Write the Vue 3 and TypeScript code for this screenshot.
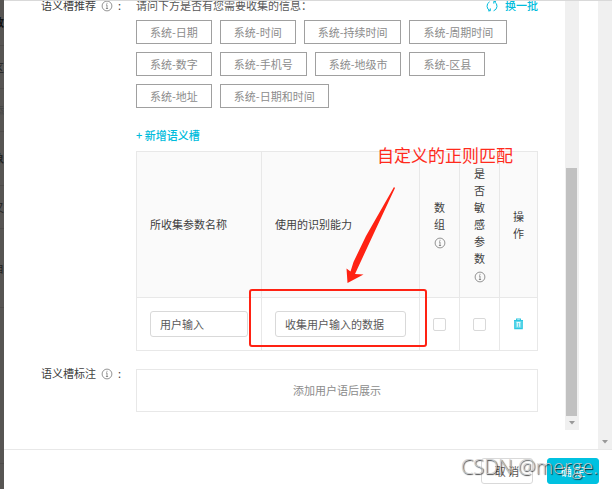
<script setup lang="ts">
import { ref } from 'vue'

interface BackdropRow {
  text: string
  size: string
}

const backdropRows: BackdropRow[] = [
  { text: '数', size: 'head' },
  { text: '区', size: 'row' },
  { text: '添', size: 'row faint' },
  { text: '象', size: 'tall' },
  { text: '又', size: 'row' },
  { text: '自', size: 'wide' },
  { text: '', size: 'rest' },
]

const suggestions = ref<string[]>([
  '系统-日期',
  '系统-时间',
  '系统-持续时间',
  '系统-周期时间',
  '系统-数字',
  '系统-手机号',
  '系统-地级市',
  '系统-区县',
  '系统-地址',
  '系统-日期和时间',
])

const paramName = ref('用户输入')
const ability = ref('收集用户输入的数据')
const isArray = ref(false)
const isSensitive = ref(false)
</script>

<template>
  <div class="page">
    <div class="backdrop" aria-hidden="true">
      <div v-for="(row, i) in backdropRows" :key="i" class="backdrop-row" :class="row.size">{{ row.text }}</div>
    </div>

    <section class="dialog">
      <div class="body">
        <div class="scroller">
          <div class="form">
            <div class="label">
              <span>语义槽推荐</span>
              <svg class="info" viewBox="0 0 12 12"><circle cx="6" cy="6" r="4.9" /><path d="M5 4.9h1v3.6M4.9 8.5h2.2M6 2.8v1" /></svg>
              <span>:</span>
            </div>
            <div class="field">
              <div class="hint">
                <span>请问下方是否有您需要收集的信息：</span>
                <button type="button" class="link refresh">
                  <svg class="refresh-icon" viewBox="0 0 12 12"><path d="M3.6 1.8A4.9 4.9 0 0 0 4 10.6M8.4 1.8A4.9 4.9 0 0 1 7.6 10.8M4.3 8.4v2.4H2M7.8 3.6V1.4h2.2" /></svg>
                  <span>换一批</span>
                </button>
              </div>
              <div class="tags">
                <button v-for="tag in suggestions" :key="tag" type="button" class="tag">{{ tag }}</button>
              </div>
              <button type="button" class="link add">+ 新增语义槽</button>

              <div class="slots">
                <table>
                  <colgroup>
                    <col class="col-name" />
                    <col />
                    <col class="col-narrow" />
                    <col class="col-narrow" />
                    <col class="col-action" />
                  </colgroup>
                  <thead>
                    <tr>
                      <th class="wide-head">所收集参数名称</th>
                      <th class="wide-head">使用的识别能力</th>
                      <th>
                        数组
                        <svg class="info" viewBox="0 0 12 12"><circle cx="6" cy="6" r="4.9" /><path d="M5 4.9h1v3.6M4.9 8.5h2.2M6 2.8v1" /></svg>
                      </th>
                      <th>
                        是否敏感参数
                        <svg class="info" viewBox="0 0 12 12"><circle cx="6" cy="6" r="4.9" /><path d="M5 4.9h1v3.6M4.9 8.5h2.2M6 2.8v1" /></svg>
                      </th>
                      <th>操作</th>
                    </tr>
                  </thead>
                  <tbody>
                    <tr>
                      <td><input v-model="paramName" class="text" type="text" aria-label="所收集参数名称" /></td>
                      <td><input v-model="ability" class="text" type="text" aria-label="使用的识别能力" /></td>
                      <td><input v-model="isArray" class="check" type="checkbox" aria-label="数组" /></td>
                      <td><input v-model="isSensitive" class="check" type="checkbox" aria-label="是否敏感参数" /></td>
                      <td>
                        <button type="button" class="trash" aria-label="操作">
                          <svg viewBox="0 0 11 12">
                            <path class="can" d="M1.8 2.5h7.4v8.2H1.8z" />
                            <path d="M1 2.5h9M3.6 2.2V1h3.8v1.2M1.8 2.5v8.2h7.4V2.5" />
                            <path class="slots-light" d="M4.3 4.5v4.3M6.7 4.5v4.3M3.6 4.5h3.8" />
                          </svg>
                        </button>
                      </td>
                    </tr>
                  </tbody>
                </table>

                <div class="note">自定义的正则匹配</div>
                <svg class="arrow" viewBox="0 0 50 98"><polygon points="48,1 49,2 28,47 9,88 17.5,88.5 1.5,97 0.5,82.5 4.5,85.5 7.5,76 20,50" /></svg>
                <div class="frame"></div>
              </div>
            </div>

            <div class="label">
              <span>语义槽标注</span>
              <svg class="info" viewBox="0 0 12 12"><circle cx="6" cy="6" r="4.9" /><path d="M5 4.9h1v3.6M4.9 8.5h2.2M6 2.8v1" /></svg>
              <span>:</span>
            </div>
            <div class="field empty">添加用户语后展示</div>
          </div>

          <div class="bar inner-bar">
            <div class="before"></div>
            <div class="thumb"></div>
            <svg class="down" viewBox="0 0 14 14"><path d="M4 5h6L7 8.5z" /></svg>
          </div>
        </div>

        <div class="bar outer-bar">
          <svg class="down" viewBox="0 0 14 14"><path d="M4 5h6L7 8.5z" /></svg>
        </div>
      </div>

      <footer class="footer">
        <button type="button" class="btn">取 消</button>
        <button type="button" class="btn primary">确 定</button>
        <div class="watermark">CSDN @merge.</div>
      </footer>
    </section>
  </div>
</template>

<style>
body {
  margin: 0;
  background: #fff;
}
</style>

<style scoped>
.page {
  display: flex;
  height: 100vh;
  overflow: hidden;
  font: 11px/17px "Noto Sans CJK SC", sans-serif;
  color: #595959;
}
.page *,
.page {
  box-sizing: border-box;
}
button,
input {
  font: inherit;
  color: inherit;
  margin: 0;
}
button {
  cursor: pointer;
}

.backdrop {
  display: flex;
  flex-direction: column;
  flex: none;
  width: 4px;
  overflow: hidden;
  background: #575553;
  color: #222;
}
.backdrop-row {
  display: flex;
  flex: none;
  align-items: center;
  justify-content: flex-end;
  height: 43px;
  border-bottom: 1px solid #4e4c4a;
}
.backdrop-row.head {
  height: 46px;
  font-weight: 700;
  color: #111;
}
.backdrop-row.faint {
  color: #444;
}
.backdrop-row.tall {
  height: 54px;
  font-weight: 700;
}
.backdrop-row.wide {
  height: 79px;
}
.backdrop-row.rest {
  height: 156px;
}

.dialog {
  display: flex;
  flex: 1;
  flex-direction: column;
  min-width: 0;
  border-top: 1px solid #d9d9d9;
}
.body {
  display: flex;
  flex: 1;
  gap: 19px;
  min-height: 0;
  overflow: hidden;
  border-bottom: 1px solid #e8e8e8;
}
.scroller {
  display: flex;
  flex: 1;
  gap: 27px;
  min-width: 0;
  margin-bottom: 19px;
  padding-left: 37px;
}
.form {
  display: grid;
  flex: 1;
  grid-template-columns: 95px minmax(0, 1fr);
  row-gap: 14px;
  align-content: start;
  min-width: 0;
  margin-top: -4px;
}
.label {
  display: flex;
  align-items: center;
  align-self: start;
  gap: 5px;
  height: 17px;
  color: #404040;
}
.info {
  width: 12px;
  height: 12px;
  fill: none;
  stroke: #666;
  stroke-width: 0.7;
  vertical-align: middle;
}
.hint {
  display: flex;
  justify-content: space-between;
  height: 17px;
  margin-bottom: 6px;
}
.link {
  padding: 0;
  border: 0;
  background: none;
  color: #00bcdc;
  font-weight: 500;
}
.refresh {
  display: flex;
  align-items: center;
  gap: 7px;
}
.refresh-icon {
  width: 12px;
  height: 12px;
  fill: none;
  stroke: #00bcdc;
  stroke-width: 1;
}
.tags {
  display: flex;
  flex-wrap: wrap;
  gap: 8px;
}
.tag {
  height: 24px;
  padding: 0 13px;
  border: 1px solid #a0a0a0;
  background: #fff;
  color: #8c8c8c;
  line-height: 22px;
}
.add {
  display: block;
  margin: 19px 0 7px;
}

.slots {
  position: relative;
}
table {
  width: 100%;
  table-layout: fixed;
  border-collapse: collapse;
}
.col-name {
  width: 125px;
}
.col-narrow {
  width: 40px;
}
.col-action {
  width: 38px;
}
th,
td {
  padding: 13px;
  border: 1px solid #e8e8e8;
  text-align: center;
}
th {
  height: 146px;
  background: #fafafa;
  color: #404040;
  font-weight: 400;
}
th:last-child,
td:last-child {
  padding: 12px;
}
th.wide-head {
  text-align: left;
}
th .info {
  display: inline-block;
  margin: 0 -1px;
}
td {
  height: 53px;
  vertical-align: middle;
}
.text {
  display: block;
  width: 100%;
  height: 26px;
  padding: 0 9px;
  border: 1px solid #d9d9d9;
  border-radius: 3px;
  background: #fff;
}
.check {
  display: block;
  width: 13px;
  height: 13px;
  appearance: none;
  border: 1px solid #d9d9d9;
  border-radius: 2px;
  background: #fff;
}
.trash {
  display: block;
  margin: 0 auto;
  padding: 0;
  border: 0;
  background: none;
}
.trash svg {
  display: block;
  width: 11px;
  height: 12px;
  fill: none;
  stroke: #2cc8e2;
  stroke-width: 1.2;
}
.trash .can {
  fill: #6ad9ea;
  stroke: none;
}
.trash .slots-light {
  stroke: #e8fafd;
  stroke-width: 1;
}

.note {
  position: absolute;
  top: -8px;
  left: 241px;
  color: #ff2a1c;
  font-size: 17px;
  line-height: 24px;
  white-space: nowrap;
}
.arrow {
  position: absolute;
  top: 35px;
  left: 210px;
  width: 50px;
  height: 98px;
  fill: #ff2213;
}
.frame {
  position: absolute;
  top: 138px;
  left: 113px;
  width: 178px;
  height: 58px;
  border: 2px solid #ff2213;
  border-radius: 3px;
}

.empty {
  display: flex;
  align-items: center;
  justify-content: center;
  height: 43px;
  margin-top: 4px;
  border: 1px solid #e8e8e8;
  color: #8c8c8c;
}

.bar {
  display: flex;
  flex: none;
  flex-direction: column;
  width: 14px;
  background: #f0f0f0;
}
.inner-bar .before {
  flex: 167;
}
.inner-bar .thumb {
  flex: 248;
  margin: 0 2px 0 1px;
  background: #c1c1c1;
}
.outer-bar {
  justify-content: flex-end;
}
.down {
  flex: none;
  width: 14px;
  height: 14px;
  fill: #999;
}

.footer {
  position: relative;
  display: flex;
  flex: none;
  justify-content: flex-end;
  gap: 14px;
  height: 39px;
  padding: 8px 13px 0 0;
}
.btn {
  width: 52px;
  height: 26px;
  padding: 0;
  border: 1px solid #d9d9d9;
  border-radius: 3px;
  background: #fff;
}
.primary {
  border-color: #00c1e0;
  background: #00c1e0;
  color: #fff;
}
.watermark {
  position: absolute;
  top: 3px;
  right: 14px;
  color: rgba(205, 205, 205, 0.9);
  font: 300 20px/28px "Open Sans", "Noto Sans", sans-serif;
  text-shadow: 1px 1px 1px rgba(0, 0, 0, 0.75);
  white-space: nowrap;
  pointer-events: none;
}
</style>
